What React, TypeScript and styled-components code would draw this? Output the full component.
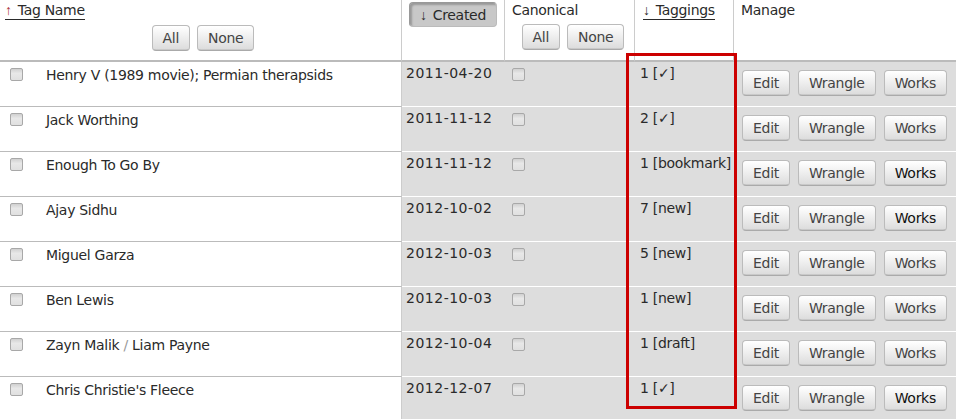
import React from "react";
import styled, { createGlobalStyle } from "styled-components";

const Global = createGlobalStyle`
  html, body { margin: 0; padding: 0; background: #fff; }
  body {
    font-family: "DejaVu Sans", Verdana, sans-serif;
    font-size: 14px;
    letter-spacing: -0.3px;
    line-height: 18px;
    color: #2a2a2a;
  }
`;

const Page = styled.div`
  position: relative;
  width: 956px;
  height: 419px;
  overflow: hidden;
`;

const Table = styled.table`
  border-collapse: separate;
  border-spacing: 0;
  width: 956px;
  table-layout: fixed;
`;

const HeadCell = styled.th<{ $last?: boolean }>`
  padding: 0;
  vertical-align: top;
  text-align: left;
  font-weight: normal;
  border-bottom: 2px solid #bbb;
  border-right: ${(p) => (p.$last ? "none" : "1px solid #ccc")};
`;

const HeadInner = styled.div<{ $pl: number; $center?: boolean }>`
  height: 60px;
  box-sizing: border-box;
  padding: 1px 0 0 ${(p) => p.$pl}px;
  display: flex;
  flex-direction: column;
  align-items: ${(p) => (p.$center ? "center" : "flex-start")};
`;

const SortLink = styled.a`
  display: inline-block;
  color: #2a2a2a;
  text-decoration: none;
  border-bottom: 1px solid #2a2a2a;
  line-height: 18px;
  cursor: pointer;
`;

const Arrow = styled.span<{ $red?: boolean }>`
  font-family: "Liberation Sans", Arial, sans-serif;
  color: ${(p) => (p.$red ? "#a33" : "inherit")};
  margin-right: 6px;
`;

const ButtonRow = styled.div`
  align-self: stretch;
  display: flex;
  justify-content: center;
  gap: 7px;
  margin-top: 5px;
`;

const Button = styled.button<{ $dark?: boolean }>`
  font-family: inherit;
  font-size: 14px;
  letter-spacing: -0.3px;
  line-height: 18px;
  height: 26px;
  box-sizing: border-box;
  padding: 3px 10px;
  color: ${(p) => (p.$dark ? "#111" : "#444")};
  background: #eee;
  background-image: linear-gradient(#fff 2%, #ddd 95%, #bbb 100%);
  border: 1px solid #bbb;
  border-bottom-color: #aaa;
  border-radius: 4px;
  white-space: nowrap;
  cursor: pointer;
`;

const PressedButton = styled(Button)`
  margin-top: 1px;
  height: 25px;
  padding: 2px 10px;
  color: #2a2a2a;
  background: #c8c8c8;
  background-image: none;
  border: 1px solid #999;
  border-bottom-color: #bbb;
  border-right-color: #bbb;
  box-shadow: inset 2px 2px 2px #999;
`;

const PlainHead = styled.span`
  display: inline-block;
  line-height: 18px;
`;

const NameCell = styled.td`
  padding: 0;
  vertical-align: top;
  background: #fff;
  border-bottom: 1px solid #bbb;
  border-right: 1px solid #ccc;
`;

const DataCell = styled.td`
  padding: 0;
  vertical-align: top;
  background: #ddd;
  border-bottom: 1px solid #fff;
`;

const CellInner = styled.div<{ $pl: number; $pt: number }>`
  height: 44px;
  box-sizing: border-box;
  padding: ${(p) => p.$pt}px 0 0 ${(p) => p.$pl}px;
  display: flex;
  align-items: flex-start;
  white-space: nowrap;
`;

const DateText = styled.span`
  letter-spacing: 0.5px;
`;

const Check = styled.input.attrs({ type: "checkbox" })`
  appearance: none;
  -webkit-appearance: none;
  margin: 0;
  width: 13px;
  height: 13px;
  flex: none;
  box-sizing: border-box;
  border: 1px solid #a8a8a8;
  border-radius: 2px;
  background: linear-gradient(#d0d0d0, #e8e8e8 40%, #e0e0e0);
`;

const NameCheck = styled(Check)`
  margin-top: 2px;
  margin-right: 23px;
`;

const CanonCheck = styled(Check)`
  margin-top: 4px;
`;

const TagName = styled.span`
  line-height: 18px;
  color: #2a2a2a;
`;

const Slash = styled.span`
  color: #999;
`;

const Actions = styled.div`
  display: flex;
  gap: 8px;
`;

const Highlight = styled.div`
  position: absolute;
  left: 626px;
  top: 53px;
  width: 111px;
  height: 356px;
  box-sizing: border-box;
  border: 3px solid #c00;
  pointer-events: none;
`;

type Row = {
  name: React.ReactNode;
  created: string;
  taggings: string;
  worksDark?: boolean;
};

const rows: Row[] = [
  { name: "Henry V (1989 movie); Permian therapsids", created: "2011-04-20", taggings: "1 [\u2713]" },
  { name: "Jack Worthing", created: "2011-11-12", taggings: "2 [\u2713]" },
  { name: "Enough To Go By", created: "2011-11-12", taggings: "1 [bookmark]", worksDark: true },
  { name: "Ajay Sidhu", created: "2012-10-02", taggings: "7 [new]", worksDark: true },
  { name: "Miguel Garza", created: "2012-10-03", taggings: "5 [new]" },
  { name: "Ben Lewis", created: "2012-10-03", taggings: "1 [new]" },
  {
    name: (
      <>
        Zayn Malik <Slash>/</Slash> Liam Payne
      </>
    ),
    created: "2012-10-04",
    taggings: "1 [draft]",
  },
  { name: "Chris Christie's Fleece", created: "2012-12-07", taggings: "1 [\u2713]", worksDark: true },
];

export default function App() {
  return (
    <Page>
      <Global />
      <Table>
        <colgroup>
          <col style={{ width: 402 }} />
          <col style={{ width: 103 }} />
          <col style={{ width: 130 }} />
          <col style={{ width: 99 }} />
          <col />
        </colgroup>
        <thead>
          <tr>
            <HeadCell>
              <HeadInner $pl={5}>
                <SortLink>
                  <Arrow $red>↑</Arrow>Tag Name
                </SortLink>
                <ButtonRow>
                  <Button>All</Button>
                  <Button>None</Button>
                </ButtonRow>
              </HeadInner>
            </HeadCell>
            <HeadCell>
              <HeadInner $pl={0} $center>
                <PressedButton>
                  <Arrow>↓</Arrow>Created
                </PressedButton>
              </HeadInner>
            </HeadCell>
            <HeadCell>
              <HeadInner $pl={7}>
                <PlainHead>Canonical</PlainHead>
                <ButtonRow>
                  <Button>All</Button>
                  <Button>None</Button>
                </ButtonRow>
              </HeadInner>
            </HeadCell>
            <HeadCell>
              <HeadInner $pl={8}>
                <SortLink>
                  <Arrow>↓</Arrow>Taggings
                </SortLink>
              </HeadInner>
            </HeadCell>
            <HeadCell $last>
              <HeadInner $pl={7}>
                <PlainHead>Manage</PlainHead>
              </HeadInner>
            </HeadCell>
          </tr>
        </thead>
        <tbody>
          {rows.map((r, i) => (
            <tr key={i}>
              <NameCell>
                <CellInner $pl={10} $pt={4}>
                  <NameCheck />
                  <TagName>{r.name}</TagName>
                </CellInner>
              </NameCell>
              <DataCell>
                <CellInner $pl={4} $pt={2}>
                  <DateText>{r.created}</DateText>
                </CellInner>
              </DataCell>
              <DataCell>
                <CellInner $pl={7} $pt={2}>
                  <CanonCheck />
                </CellInner>
              </DataCell>
              <DataCell>
                <CellInner $pl={5} $pt={2}>
                  {r.taggings}
                </CellInner>
              </DataCell>
              <DataCell>
                <CellInner $pl={8} $pt={8}>
                  <Actions>
                    <Button>Edit</Button>
                    <Button>Wrangle</Button>
                    <Button $dark={r.worksDark}>Works</Button>
                  </Actions>
                </CellInner>
              </DataCell>
            </tr>
          ))}
        </tbody>
      </Table>
      <Highlight />
    </Page>
  );
}
